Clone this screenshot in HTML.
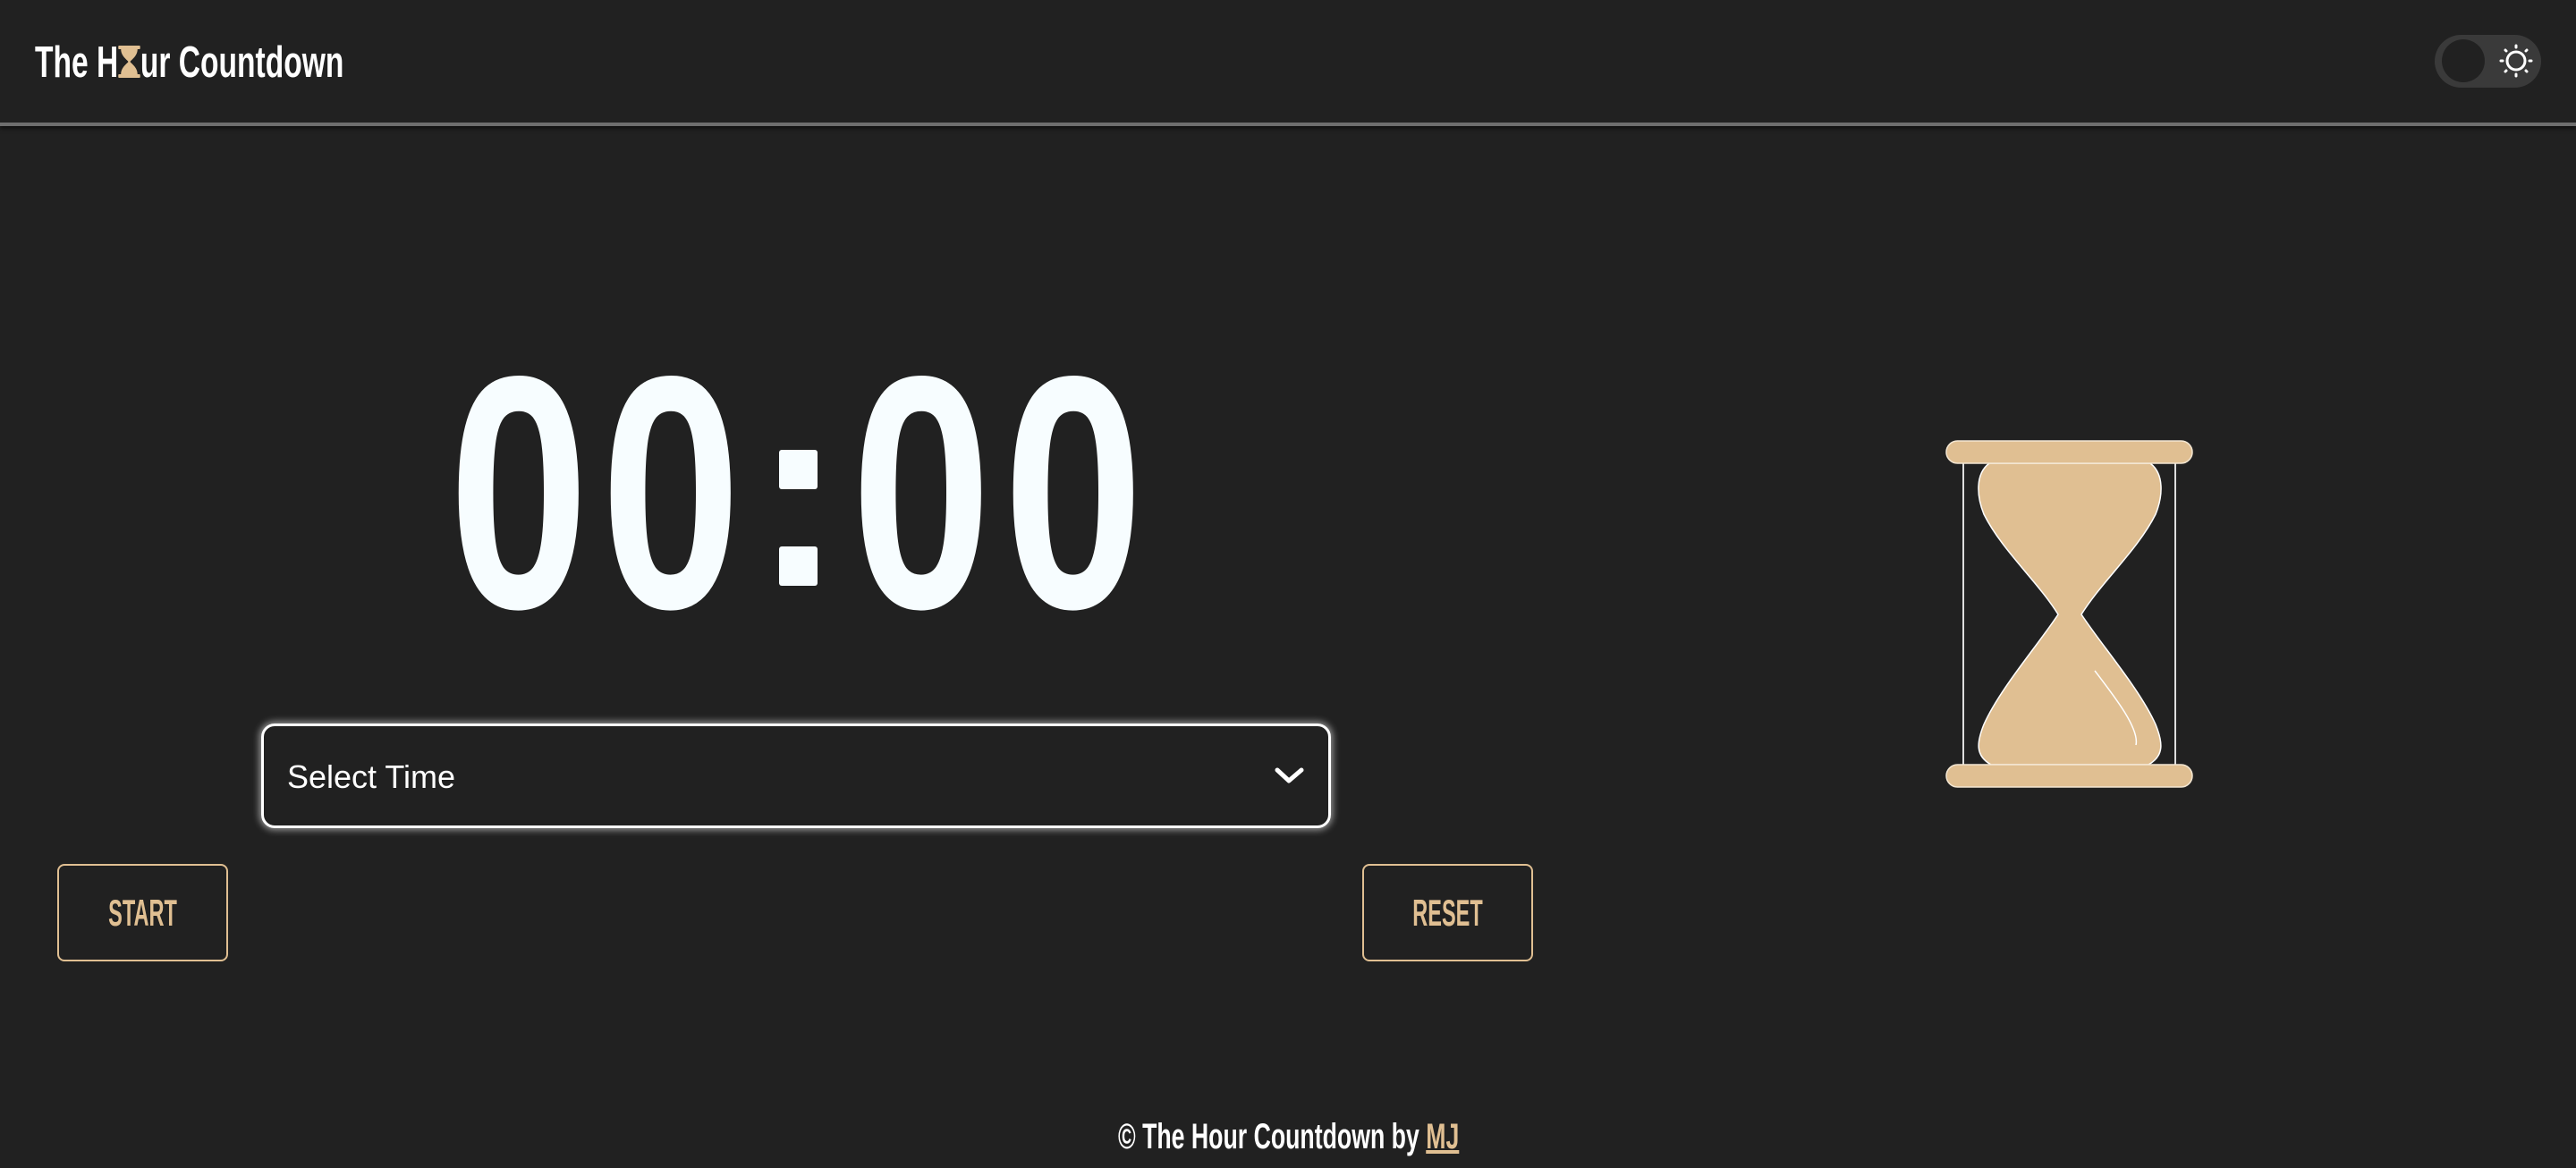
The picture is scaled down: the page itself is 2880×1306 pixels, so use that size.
<!DOCTYPE html>
<html><head><meta charset="utf-8"><style>
*{margin:0;padding:0;box-sizing:border-box}
html,body{width:2880px;height:1306px;overflow:hidden;background:#212121;font-family:"Liberation Sans",sans-serif;color:#fff}
.abs{position:absolute}
.hdr{position:absolute;left:0;top:0;width:2880px;height:141px;border-bottom:4px solid #6e6e6e;box-shadow:0 3px 4px rgba(0,0,0,.5)}
.logo{position:absolute;left:39px;top:46px;font-size:49px;line-height:1;white-space:nowrap;transform:scaleX(.685);transform-origin:left top;color:#fff;font-weight:bold}
.logo svg{display:inline-block;vertical-align:top;margin-top:5px}
.dig{position:absolute;top:365px;width:300px;text-align:center;font-size:371px;line-height:1;font-weight:bold;color:#f7fdff;transform:scaleX(.76)}
.col{position:absolute;left:871px;width:43px;background:#f7fdff;border-radius:3px}
.sel{position:absolute;left:292px;top:809px;width:1196px;height:117px;border:3px solid #fff;border-radius:15px;box-shadow:0 0 8px 2px rgba(255,255,255,.55)}
.sel span{position:absolute;left:26px;top:36px;font-size:36px;color:#fff}
.btn{position:absolute;top:966px;width:191px;height:109px;border:2px solid #e0bf92;border-radius:8px}
.btn span{position:absolute;left:0;width:100%;top:32px;text-align:center;font-size:42px;line-height:1;color:#e0bf92;transform:scaleX(.56);font-weight:bold}
.foot{position:absolute;left:1250px;top:1251px;font-size:40px;line-height:1;white-space:nowrap;transform:scaleX(.667);transform-origin:left top;font-weight:bold}
.foot a{color:#e0bf92;text-decoration:underline}
</style></head><body>
<div class="hdr"></div>
<div class="logo">The H<svg width="36" height="36" viewBox="0 0 24 36" preserveAspectRatio="none"><rect x="0" y="0" width="24" height="4" rx="1" fill="#e0bf92"/><rect x="0" y="32" width="24" height="4" rx="1" fill="#e0bf92"/><path d="M3,4 L21,4 C21,12 14,16 13,18 C14,20 21,24 21,32 L3,32 C3,24 10,20 11,18 C10,16 3,12 3,4Z" fill="#e0bf92"/></svg>ur Countdown</div>
<svg class="abs" style="left:0;top:0" width="2880" height="1306" viewBox="0 0 2880 1306">
 <rect x="2722" y="39" width="119" height="59" rx="29.5" fill="#3a3a3a"/>
 <circle cx="2754" cy="68" r="24" fill="#212121"/>
 <circle cx="2813" cy="68" r="10" fill="none" stroke="#fff" stroke-width="3"/>
 <g stroke="#fff" stroke-width="3" stroke-linecap="round">
  <line x1="2813" y1="51" x2="2813" y2="53"/><line x1="2813" y1="83" x2="2813" y2="85"/>
  <line x1="2796" y1="68" x2="2798" y2="68"/><line x1="2828" y1="68" x2="2830" y2="68"/>
  <line x1="2801" y1="56" x2="2802" y2="57"/><line x1="2824" y1="79" x2="2825" y2="80"/>
  <line x1="2825" y1="56" x2="2824" y2="57"/><line x1="2801" y1="80" x2="2802" y2="79"/>
 </g>
 <line x1="2195" y1="518" x2="2195" y2="855" stroke="#ddd" stroke-width="2"/>
 <line x1="2432" y1="518" x2="2432" y2="855" stroke="#ddd" stroke-width="2"/>
 <path d="M2224,518 L2404,518 C2420,530 2418,555 2410,575 C2390,615 2350,650 2327,687 C2350,722 2392,770 2410,810 C2418,830 2420,845 2402,855 L2226,855 C2208,845 2210,830 2218,810 C2236,770 2278,722 2301,687 C2278,650 2238,615 2218,575 C2210,555 2208,530 2224,518 Z" fill="#e0bf92" stroke="#fff" stroke-width="1.5"/>
 <path d="M2342,750 C2365,780 2392,815 2388,833" fill="none" stroke="#fff" stroke-width="1.5"/>
 <rect x="2176" y="493" width="275" height="25" rx="12.5" fill="#e0bf92" stroke="#f3e6d2" stroke-width="1.5"/>
 <rect x="2176" y="855" width="275" height="25" rx="12.5" fill="#e0bf92" stroke="#f3e6d2" stroke-width="1.5"/>
 <path d="M1428,861 L1441,873 L1455,861" fill="none" stroke="#fff" stroke-width="5" stroke-linecap="round" stroke-linejoin="round"/>
</svg>
<div class="dig" style="left:430px">0</div>
<div class="dig" style="left:600px">0</div>
<div class="dig" style="left:880px">0</div>
<div class="dig" style="left:1050px">0</div>
<div class="col" style="top:503px;height:44px"></div>
<div class="col" style="top:611px;height:44px"></div>
<div class="sel"><span>Select Time</span></div>
<div class="btn" style="left:64px"><span>START</span></div>
<div class="btn" style="left:1523px"><span>RESET</span></div>
<div class="foot">© The Hour Countdown by <a>MJ</a></div>
</body></html>
